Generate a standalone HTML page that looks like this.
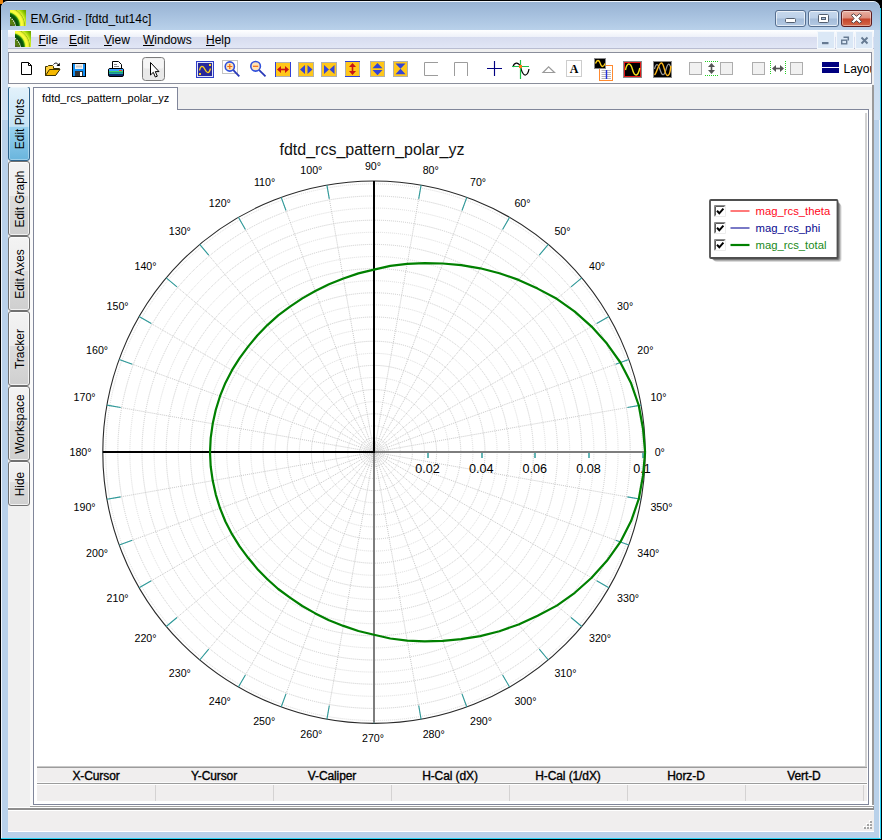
<!DOCTYPE html>
<html lang="en">
<head>
<meta charset="utf-8">
<title>EM.Grid - [fdtd_tut14c]</title>
<style>
html,body{margin:0;padding:0;}
body{width:882px;height:840px;overflow:hidden;background:#000;position:relative;font-family:"Liberation Sans",sans-serif;}
.abs{position:absolute;}
#frame{left:1px;top:1px;width:879px;height:837px;background:#b9d1ea;border-radius:7px 7px 0 0;overflow:hidden;}
#frame .hl{left:0;top:0;right:0;bottom:0;border:1px solid #eef4fb;border-radius:7px 7px 0 0;border-bottom:none;}
#cyanR{left:880px;top:8px;width:1px;height:831px;background:#27d4f5;}
#cyanB{left:1px;top:838px;width:880px;height:1px;background:#27d4f5;}
#orange{left:0;top:0;width:3px;height:4px;background:#e8820c;}
#titlebar{left:1px;top:2px;width:879px;height:28px;background:linear-gradient(#98b3d3 0,#a6c0de 45%,#b9d1ea 100%);border-radius:6px 6px 0 0;}
#sideL{left:2px;top:30px;width:6px;height:90px;background:linear-gradient(#c6d9ee,#cfe0f2);}
#sideR{left:874px;top:30px;width:6px;height:90px;background:linear-gradient(#c6d9ee,#cfe0f2);}
#title{left:30.500px;top:10.500px;font-size:12px;line-height:16px;color:#000;white-space:nowrap;}
#client{left:8px;top:30px;width:866px;height:802px;background:#f0f0f0;}
#menubar{left:8px;top:30px;width:866px;height:18px;background:linear-gradient(#ffffff 0,#eef1f9 38%,#d7dcef 39%,#e1e6f5 100%);}
#menuline{left:8px;top:48px;width:866px;height:1px;background:#b9bdd1;}
.menu{top:33px;font-size:12px;line-height:14px;color:#000;white-space:nowrap;}
.menu u{text-decoration:underline;text-underline-offset:1px;}
#toolbar{left:8px;top:52px;width:862px;height:30px;background:#fff;border:1px solid #8a8e9b;}
.capbtn{top:10px;height:15px;border:1px solid #566f90;border-radius:3px;box-shadow:inset 0 0 0 1px rgba(255,255,255,.65);background:linear-gradient(#c6d8ed 0,#bcd0e8 48%,#a4bcd9 52%,#b3c9e3 100%);}
#closebtn{border-color:#5c1b1e;background:linear-gradient(#e9b0a3 0,#dc8d7c 48%,#c5432a 52%,#d4694a 100%);box-shadow:inset 0 0 0 1px rgba(255,255,255,.4);}
.mdibtn{top:31px;width:16px;height:16px;border:1px solid #f4f8fc;background:#dbe8f6;}
.vtab{left:8px;width:20px;border:1px solid #707070;border-radius:3px;background:linear-gradient(#f3f3f3 0,#ececec 46%,#dedede 47%,#cfcfcf 100%);box-shadow:inset 0 0 0 1px rgba(255,255,255,.7);}
.vtab.sel{border-color:#2c628b;background:linear-gradient(#e3f2fb 0,#c4e3f5 54%,#98d1ef 55%,#6ab5dd 100%);box-shadow:inset 0 0 0 1px rgba(255,255,255,.35);}
.vtab span{position:absolute;left:50%;top:50%;font-size:13px;line-height:14px;white-space:nowrap;color:#000;transform:translate(-50%,-50%) translate(1.4px,0) rotate(-90deg) scale(0.915,0.97);}
#page{left:33px;top:109px;width:834px;height:694px;background:#fff;border:1px solid #80869a;}
#doctab{left:33px;top:87px;width:143px;height:22px;background:#fff;border:1px solid #80869a;border-bottom:none;}
#doctab span{position:absolute;left:8px;top:3px;font-size:11px;line-height:14px;white-space:nowrap;color:#000;}
#gap{left:30px;top:87px;width:3px;height:719px;background:#fafafa;}
.th{top:769px;height:14px;font-size:12px;font-weight:normal;-webkit-text-stroke:0.35px #000;line-height:14px;text-align:center;color:#000;width:118px;letter-spacing:-0.1px;}
#status{left:8px;top:810px;width:866px;height:22px;background:#f0eeee;border-top:1px solid #fff;border-bottom:1px solid #fff;box-sizing:border-box;}
</style>
</head>
<body>
<div class="abs" id="orange"></div>
<div class="abs" id="cyanR"></div>
<div class="abs" id="cyanB"></div>
<div class="abs" id="frame"><div class="abs hl"></div></div>
<div class="abs" id="titlebar"></div>
<div class="abs" id="sideL"></div>
<div class="abs" id="sideR"></div>
<div class="abs" id="client"></div>

<!-- title icon -->
<svg class="abs" style="left:10px;top:10px" width="16" height="16" viewBox="0 0 16 16">
<defs><radialGradient id="ig" gradientUnits="userSpaceOnUse" cx="-3.6" cy="15.6" r="24">
<stop offset="0" stop-color="#6f8f14"/><stop offset=".35" stop-color="#4f7a10"/><stop offset=".39" stop-color="#0a4a08"/><stop offset=".5" stop-color="#0b5c0c"/><stop offset=".545" stop-color="#3c9c10"/><stop offset=".58" stop-color="#d5ee30"/><stop offset=".63" stop-color="#ffff3c"/><stop offset=".7" stop-color="#f2f53a"/><stop offset=".74" stop-color="#c8e020"/><stop offset=".76" stop-color="#a2ba18"/><stop offset=".785" stop-color="#d8f030"/><stop offset=".86" stop-color="#a4d80c"/><stop offset=".95" stop-color="#7ab400"/><stop offset="1" stop-color="#6ea800"/></radialGradient>
<g id="emicon"><rect width="16" height="16" fill="url(#ig)"/><path d="M0 7.4 C2.6 9 4.6 11.8 5.6 15.6" fill="none" stroke="#fff" stroke-width="1.1" stroke-dasharray="1.3 1"/><rect x="0" y="14.6" width="2.4" height="1.4" fill="#4a4a3a" opacity=".8"/></g></defs>
<use href="#emicon"/>
</svg>
<div class="abs" id="title">EM.Grid - [fdtd_tut14c]</div>

<!-- caption buttons -->
<div class="abs capbtn" style="left:775px;width:29px"></div>
<div class="abs capbtn" style="left:808px;width:29px"></div>
<div class="abs capbtn" id="closebtn" style="left:841px;width:29px"></div>
<svg class="abs" style="left:775px;top:10px" width="98" height="17" viewBox="0 0 98 17">
<rect x="10.5" y="8.5" width="10" height="4" rx="1" fill="#fff" stroke="#535f70" stroke-width="1"/>
<rect x="43.5" y="4.5" width="10" height="8" rx="1" fill="#fff" stroke="#535f70" stroke-width="1"/>
<rect x="46.5" y="7.5" width="4" height="2" fill="#a9bfdb" stroke="#535f70" stroke-width="1"/>
<path d="M76.3 5.2 L78.6 3.8 L81.5 6.3 L84.4 3.8 L86.7 5.2 L83.9 8.5 L86.7 11.8 L84.4 13.2 L81.5 10.7 L78.6 13.2 L76.3 11.8 L79.1 8.5Z" fill="#fff" stroke="#5e4a4a" stroke-width="1" stroke-linejoin="round"/>
</svg>

<!-- menu bar -->
<div class="abs" id="menubar"></div>
<div class="abs" id="menuline"></div>
<svg class="abs" style="left:15px;top:31px" width="16" height="16" viewBox="0 0 16 16"><use href="#emicon"/></svg>
<div class="abs menu" style="left:38.5px"><u>F</u>ile</div>
<div class="abs menu" style="left:69px"><u>E</u>dit</div>
<div class="abs menu" style="left:104px"><u>V</u>iew</div>
<div class="abs menu" style="left:143px"><u>W</u>indows</div>
<div class="abs menu" style="left:206px"><u>H</u>elp</div>
<div class="abs mdibtn" style="left:817px"></div>
<div class="abs mdibtn" style="left:836px"></div>
<div class="abs mdibtn" style="left:855px"></div>
<svg class="abs" style="left:817px;top:31px" width="57" height="18" viewBox="0 0 57 18">
<rect x="5" y="11" width="6.5" height="2.2" fill="#667a92"/>
<path d="M26.5 6.3 H31.3 V9.5" fill="none" stroke="#667a92" stroke-width="1.5"/>
<rect x="24.7" y="9.2" width="5" height="3.6" fill="none" stroke="#667a92" stroke-width="1.4"/>
<path d="M44.5 6.5 L50.5 12.5 M50.5 6.5 L44.5 12.5" stroke="#667a92" stroke-width="1.9"/>
</svg>

<!-- toolbar -->
<div class="abs" id="toolbar"></div>
<div class="abs" style="left:872px;top:85px;width:2px;height:725px;background:#9a9a9a"></div>
<svg class="abs" style="left:9px;top:53px" width="862" height="30" viewBox="9 53 862 30" font-family="Liberation Sans, sans-serif">
<!-- new -->
<path d="M21.500 62.500 H28.500 L31.500 65.500 V74.500 H21.500Z" fill="#fff" stroke="#000" stroke-width="1"/>
<path d="M28.500 62.500 V65.500 H31.500" fill="none" stroke="#000" stroke-width="1"/>
<!-- open -->
<path d="M45.500 75.500 V66.500 H47.500 L48.500 65.500 H52.500 L53.500 66.500 V68.500 H59.500 L55.500 75.500Z" fill="#ffcf3a" stroke="#3a3000" stroke-width="1" stroke-linejoin="round"/>
<path d="M45.500 75.500 L49.500 69.500 H60 L55.500 75.500Z" fill="#f5b800" stroke="#3a3000" stroke-width="1" stroke-linejoin="round"/>
<path d="M53.500 64.500 C55 62.500 57.500 62.500 58.500 65.500" fill="none" stroke="#000" stroke-width="1"/>
<path d="M56.500 66 H59.800 V62.800Z" fill="#000"/>
<!-- save -->
<rect x="72.500" y="63.500" width="13" height="13" fill="#1390f5" stroke="#000" stroke-width="1"/>
<rect x="75" y="64" width="8" height="5" fill="#f2f2f2"/>
<rect x="76" y="65.500" width="6" height="2" fill="#c8c8c8"/>
<rect x="75" y="71" width="8" height="5" fill="#333"/>
<rect x="80" y="72" width="2" height="4" fill="#fff"/>
<!-- print -->
<path d="M112.500 69 V61.500 H118.500 L121.500 64.500 V69Z" fill="#fff" stroke="#000" stroke-width="1"/>
<path d="M114 64.500 H117 M114 66.500 H119" stroke="#888" stroke-width="1"/>
<rect x="108.500" y="68.500" width="15" height="8" rx="1.500" fill="#0b2a6e" stroke="#000" stroke-width="1"/>
<rect x="109" y="69" width="14" height="2" fill="#3aa0ff"/>
<rect x="109" y="71" width="14" height="1.500" fill="#3bd06a"/>
<rect x="109" y="72.500" width="14" height="1.500" fill="#1aa6a6"/>
<rect x="119" y="70" width="3" height="1" fill="#f04030"/>
<!-- pointer button -->
<rect x="142.500" y="57.500" width="22" height="23" rx="3" fill="#e9e9e9" stroke="#7c7c7c" stroke-width="1"/>
<rect x="143.500" y="58.500" width="20" height="10" rx="2" fill="#f5f5f5"/>
<path d="M150.500 62.500 V75 L153.300 72.300 L155.300 77 L157.300 76.200 L155.300 71.600 H159Z" fill="#fff" stroke="#000" stroke-width="1" stroke-linejoin="round"/>
<!-- graph icon -->
<rect x="196.500" y="61.500" width="17" height="16" fill="#dfe5fa" stroke="#3040c8" stroke-width="1"/>
<rect x="198" y="63" width="14" height="13" fill="#28289c"/>
<path d="M199.5 70.5 C200.5 65.3 203 65.3 205 69.5 S209 74.2 210.5 68.5" fill="none" stroke="#ffd21a" stroke-width="1.3"/>
<rect x="209" y="64" width="2" height="2" fill="#ffd21a"/><rect x="199" y="73" width="2" height="2" fill="#ffd21a"/>
<!-- zoom in -->
<rect x="222.500" y="60.500" width="15" height="13" fill="#fff" stroke="#c4c4c4" stroke-width="1"/>
<circle cx="229.800" cy="66.500" r="4.600" fill="#ffe3b5" stroke="#3050dc" stroke-width="1.600"/>
<path d="M227.300 66.500 H232.300 M229.800 64 V69" stroke="#f06a10" stroke-width="1.200"/>
<path d="M233.300 70.200 L239.300 76.300" stroke="#2838b8" stroke-width="1.800"/>
<!-- zoom out -->
<circle cx="255.600" cy="66.300" r="4.800" fill="#ffe3b5" stroke="#3050dc" stroke-width="1.600"/>
<path d="M253 66.300 H258.200" stroke="#f06a10" stroke-width="1.200"/>
<path d="M259.200 70.200 L265.500 76.300" stroke="#2838b8" stroke-width="1.800"/>
<!-- h expand -->
<rect x="275" y="62" width="16" height="15" fill="#ffc71a"/>
<path d="M275 62.500 H291 M275 76.500 H291" stroke="#b0b0b0" stroke-width="1"/>
<path d="M275.500 62 V77 M290.500 62 V77" stroke="#3040d8" stroke-width="1"/>
<path d="M277 69.500 L281 66 V73Z M289 69.500 L285 66 V73Z" fill="#c81414"/>
<path d="M280 69.500 H286" stroke="#c81414" stroke-width="1.600"/>
<!-- <> -->
<rect x="298.500" y="62.500" width="15" height="14" fill="#ffc71a" stroke="#b0b0b0" stroke-width="1"/>
<path d="M300 69.500 L305 65 V74Z M312.500 69.500 L307.500 65 V74Z" fill="#3344d8"/>
<!-- >< -->
<rect x="321.500" y="62.500" width="15" height="14" fill="#ffc71a" stroke="#b0b0b0" stroke-width="1"/>
<path d="M324 65 L329 69.500 L324 74Z M334.500 65 L329.500 69.500 L334.500 74Z" fill="#3344d8"/>
<!-- v expand -->
<rect x="345" y="61" width="15" height="16" fill="#ffc71a"/>
<path d="M345.500 61 V77 M359.500 61 V77" stroke="#b0b0b0" stroke-width="1"/>
<path d="M345 61.500 H360 M345 76.500 H360" stroke="#3040d8" stroke-width="1"/>
<path d="M352.500 63 L349 67 H356Z M352.500 75 L349 71 H356Z" fill="#c81414"/>
<path d="M352.500 66 V72" stroke="#c81414" stroke-width="1.600"/>
<!-- up/down -->
<rect x="370.500" y="61.500" width="14" height="15" fill="#ffc71a" stroke="#b0b0b0" stroke-width="1"/>
<path d="M377.500 63 L372.500 68.300 H382.500Z M377.500 75.300 L372.500 70 H382.500Z" fill="#3344d8"/>
<!-- hourglass -->
<rect x="393.500" y="61.500" width="14" height="15" fill="#ffc71a" stroke="#b0b0b0" stroke-width="1"/>
<path d="M395.500 63.500 H405.500 L400.500 68.800Z M395.500 74.200 H405.500 L400.500 68.800Z" fill="#3344d8"/>
<!-- brackets -->
<path d="M438 62.500 H424.500 V75.500 H438" fill="none" stroke="#9c9c9c" stroke-width="1"/>
<path d="M454.500 76 V62.500 H467.500 V76" fill="none" stroke="#9c9c9c" stroke-width="1"/>
<!-- plus -->
<path d="M487 68.5 H502 M494.5 61 V76" stroke="#000080" stroke-width="1.15"/>
<!-- cursor on sine -->
<path d="M513 67 C514 62.500 518 61.500 520.500 66.600 C521.500 71 523 75.500 525.500 75 C527.500 74.500 528.500 72 529 69" fill="none" stroke="#000" stroke-width="1.200"/>
<path d="M512 66.500 H529 M520.500 60 V79" stroke="#1fc04a" stroke-width="1.200"/>
<rect x="519" y="65" width="3" height="3" fill="#ff7a14"/>
<!-- triangle -->
<path d="M543 72.500 L548.600 66.800 L554.500 72.500Z" fill="none" stroke="#9a9a9a" stroke-width="1.200"/>
<!-- A -->
<rect x="566.500" y="60.500" width="15" height="16" fill="#fff" stroke="#9a9a9a" stroke-width="1" stroke-dasharray="1 1"/>
<text x="574" y="72.8" font-family="Liberation Serif, serif" font-weight="bold" font-size="12" text-anchor="middle" fill="#000">A</text>
<!-- sine + doc -->
<rect x="599.500" y="65.500" width="13" height="15" fill="#fff" stroke="#ff8a30" stroke-width="1"/>
<path d="M601.500 70.500 H611 M601.500 72.500 H611 M601.500 74.500 H611 M601.500 76.500 H611 M601.500 78.500 H611" stroke="#b8b8b8" stroke-width="1"/>
<path d="M606.500 70 V79" stroke="#2030e0" stroke-width="1.400"/>
<rect x="594.500" y="58.500" width="11" height="10" fill="#000" stroke="#8a8a8a" stroke-width="1"/>
<path d="M595.500 63.500 C597 59.500 599 59.500 600.300 63.500 S603.500 67.500 605 63.500" fill="none" stroke="#ffd21a" stroke-width="1.300"/>
<!-- red sine -->
<rect x="623.500" y="61.500" width="18" height="16" fill="#000" stroke="#8a8a8a" stroke-width="1"/>
<rect x="624.500" y="62.500" width="16" height="14" fill="#000" stroke="#e01818" stroke-width="1"/>
<path d="M625.500 70 C627 62 630.500 62 632.500 69.500 S638 77 639.800 68" fill="none" stroke="#f5e21a" stroke-width="1.400"/>
<!-- two sines -->
<rect x="653.500" y="61.500" width="18" height="16" fill="#000" stroke="#8a8a8a" stroke-width="1"/>
<path d="M654.500 69 C656 63 658 63 660 69.500 S664 77 666 69.500 S669.500 63 671 68" fill="none" stroke="#9a9a9a" stroke-width="1.200"/>
<path d="M654.500 75 C657 73 658.500 62.500 661.500 63 S664.500 76 667.500 75.500 S670 70 671 66" fill="none" stroke="#ffb81a" stroke-width="1.400"/>
<!-- box ↕ box -->
<rect x="689.500" y="62.500" width="12" height="12" fill="#f1f1f1" stroke="#adadad" stroke-width="1"/>
<rect x="720.500" y="62.500" width="12" height="12" fill="#f1f1f1" stroke="#adadad" stroke-width="1"/>
<path d="M705 61.500 H718 M705 75.500 H718" stroke="#22d022" stroke-width="1" stroke-dasharray="1 1"/>
<path d="M711.500 63 L708 67 H715Z M711.500 74 L708 70 H715Z" fill="#555"/>
<path d="M711.500 66 V71" stroke="#555" stroke-width="1.600"/>
<!-- box ↔ box -->
<rect x="752.500" y="62.500" width="12" height="12" fill="#f1f1f1" stroke="#adadad" stroke-width="1"/>
<rect x="790.500" y="62.500" width="12" height="12" fill="#f1f1f1" stroke="#adadad" stroke-width="1"/>
<path d="M770.500 61 V74 M785.500 61 V74" stroke="#22d022" stroke-width="1" stroke-dasharray="1 1"/>
<path d="M772 68.500 L776 65 V72Z M784 68.500 L780 65 V72Z" fill="#555"/>
<path d="M775 68.500 H781" stroke="#555" stroke-width="1.600"/>
<!-- layout -->
<rect x="822" y="62" width="17" height="5" fill="#000080"/>
<rect x="822" y="68" width="17" height="5" fill="#000080"/>
<text x="843.500" y="72.500" font-size="12" fill="#000">Layout</text>
</svg>
<!-- left vertical tabs -->
<div class="abs vtab sel" style="top:86px;height:73px"><span>Edit Plots</span></div>
<div class="abs vtab" style="top:161px;height:73px"><span>Edit Graph</span></div>
<div class="abs vtab" style="top:236px;height:73px"><span>Edit Axes</span></div>
<div class="abs vtab" style="top:311px;height:73px"><span>Tracker</span></div>
<div class="abs vtab" style="top:386px;height:73px"><span>Workspace</span></div>
<div class="abs vtab" style="top:461px;height:43px"><span>Hide</span></div>
<div class="abs" id="gap"></div>

<!-- document page -->
<div class="abs" id="page"></div>
<div class="abs" id="doctab"><span>fdtd_rcs_pattern_polar_yz</span></div>
<div class="abs" style="left:869px;top:110px;width:3px;height:696px;background:#fff"></div>
<div class="abs" style="left:8px;top:84px;width:864px;height:3px;background:#fcfcfc"></div>
<div class="abs" style="left:865px;top:113px;width:2px;height:653px;background:#d2d2d2"></div>

<!-- splitter / status -->
<div class="abs" style="left:30px;top:805px;width:844px;height:1px;background:#fff"></div>
<div class="abs" style="left:30px;top:806px;width:844px;height:1px;background:#a0a0a0"></div>
<div class="abs" style="left:8px;top:807px;width:865px;height:1px;background:#fff"></div>
<div class="abs" style="left:8px;top:808px;width:866px;height:2px;background:#8e8e8e"></div>
<div class="abs" id="status"></div>
<svg class="abs" style="left:861px;top:819px" width="12" height="12" viewBox="0 0 12 12">
<g fill="#fff"><rect x="8" y="1" width="2" height="2"/><rect x="5" y="4" width="2" height="2"/><rect x="8" y="4" width="2" height="2"/><rect x="2" y="7" width="2" height="2"/><rect x="5" y="7" width="2" height="2"/><rect x="8" y="7" width="2" height="2"/></g>
<g fill="#a5a5a5"><rect x="9" y="2" width="2" height="2"/><rect x="6" y="5" width="2" height="2"/><rect x="9" y="5" width="2" height="2"/><rect x="3" y="8" width="2" height="2"/><rect x="6" y="8" width="2" height="2"/><rect x="9" y="8" width="2" height="2"/></g>
</svg>

<!-- cursor table -->
<div class="abs" style="left:37px;top:766px;width:830px;height:1px;background:#c9c9c9"></div>
<div class="abs" style="left:37px;top:767px;width:830px;height:1px;background:#9c9c9c"></div>
<div class="abs" style="left:37px;top:768px;width:830px;height:14px;background:#f0eeee"></div>
<div class="abs" style="left:37px;top:782px;width:830px;height:1px;background:#fbfbfb"></div>
<div class="abs" style="left:37px;top:783px;width:830px;height:1px;background:#9c9c9c"></div>
<div class="abs" style="left:37px;top:784px;width:830px;height:1px;background:#fff"></div>
<div class="abs" style="left:37px;top:785px;width:830px;height:16px;background:#f0eeee"></div>
<div class="abs" style="left:155px;top:785px;width:1px;height:16px;background:#d4d2d2"></div>
<div class="abs" style="left:273px;top:785px;width:1px;height:16px;background:#d4d2d2"></div>
<div class="abs" style="left:391px;top:785px;width:1px;height:16px;background:#d4d2d2"></div>
<div class="abs" style="left:509px;top:785px;width:1px;height:16px;background:#d4d2d2"></div>
<div class="abs" style="left:627px;top:785px;width:1px;height:16px;background:#d4d2d2"></div>
<div class="abs" style="left:745px;top:785px;width:1px;height:16px;background:#d4d2d2"></div>
<div class="abs" style="left:863px;top:785px;width:1px;height:16px;background:#d4d2d2"></div>
<div class="abs th" style="left:37px">X-Cursor</div>
<div class="abs th" style="left:155px">Y-Cursor</div>
<div class="abs th" style="left:273px">V-Caliper</div>
<div class="abs th" style="left:391px">H-Cal (dX)</div>
<div class="abs th" style="left:509px">H-Cal (1/dX)</div>
<div class="abs th" style="left:627px">Horz-D</div>
<div class="abs th" style="left:745px">Vert-D</div>
<svg class="abs" style="left:34px;top:110px" width="834" height="656" viewBox="34 110 834 656" font-family="Liberation Sans, sans-serif">
<g fill="none" stroke="#c9c9c9" stroke-width="1" stroke-dasharray="1 1">
<circle cx="374.0" cy="452.2" r="268.3" stroke="#dcdcdc"/>
<circle cx="374.0" cy="452.2" r="256.2" stroke="#cbcbcb"/>
<circle cx="374.0" cy="452.2" r="244.1" stroke="#dcdcdc"/>
<circle cx="374.0" cy="452.2" r="232.0" stroke="#cbcbcb"/>
<circle cx="374.0" cy="452.2" r="219.9" stroke="#dcdcdc"/>
<circle cx="374.0" cy="452.2" r="207.8" stroke="#cbcbcb"/>
<circle cx="374.0" cy="452.2" r="195.7" stroke="#dcdcdc"/>
<circle cx="374.0" cy="452.2" r="183.6" stroke="#cbcbcb"/>
<circle cx="374.0" cy="452.2" r="171.5" stroke="#dcdcdc"/>
<circle cx="374.0" cy="452.2" r="159.4" stroke="#cbcbcb"/>
<circle cx="374.0" cy="452.2" r="147.3" stroke="#dcdcdc"/>
<circle cx="374.0" cy="452.2" r="135.2" stroke="#cbcbcb"/>
<circle cx="374.0" cy="452.2" r="123.1" stroke="#dcdcdc"/>
<circle cx="374.0" cy="452.2" r="111.0" stroke="#cbcbcb"/>
<circle cx="374.0" cy="452.2" r="98.9" stroke="#dcdcdc"/>
<circle cx="374.0" cy="452.2" r="86.8" stroke="#cbcbcb"/>
<circle cx="374.0" cy="452.2" r="74.7" stroke="#dcdcdc"/>
<circle cx="374.0" cy="452.2" r="62.6" stroke="#cbcbcb"/>
<circle cx="374.0" cy="452.2" r="50.5" stroke="#dcdcdc"/>
<circle cx="374.0" cy="452.2" r="38.4" stroke="#cbcbcb"/>
<circle cx="374.0" cy="452.2" r="26.3" stroke="#dcdcdc"/>
<circle cx="374.0" cy="452.2" r="14.2" stroke="#cbcbcb"/>
<circle cx="374.0" cy="452.2" r="2.5" stroke="#dcdcdc"/>
<circle cx="374.0" cy="452.2" r="5.0" stroke="#dcdcdc"/>
<circle cx="374.0" cy="452.2" r="7.5" stroke="#dcdcdc"/>
<circle cx="374.0" cy="452.2" r="10.0" stroke="#dcdcdc"/>
<path d="M374.0 452.2L641.1 405.1M374.0 452.2L628.8 359.4M374.0 452.2L608.9 316.6M374.0 452.2L581.8 277.9M374.0 452.2L548.3 244.4M374.0 452.2L509.6 217.3M374.0 452.2L466.8 197.4M374.0 452.2L421.1 185.1M374.0 452.2L326.9 185.1M374.0 452.2L281.2 197.4M374.0 452.2L238.4 217.3M374.0 452.2L199.7 244.4M374.0 452.2L166.2 277.9M374.0 452.2L139.1 316.6M374.0 452.2L119.2 359.4M374.0 452.2L106.9 405.1M374.0 452.2L106.9 499.3M374.0 452.2L119.2 545.0M374.0 452.2L139.1 587.8M374.0 452.2L166.2 626.5M374.0 452.2L199.7 660.0M374.0 452.2L238.4 687.1M374.0 452.2L281.2 707.0M374.0 452.2L326.9 719.3M374.0 452.2L421.1 719.3M374.0 452.2L466.8 707.0M374.0 452.2L509.6 687.1M374.0 452.2L548.3 660.0M374.0 452.2L581.8 626.5M374.0 452.2L608.9 587.8M374.0 452.2L628.8 545.0M374.0 452.2L641.1 499.3" stroke="#c9c9c9"/>
</g>
<circle cx="374.0" cy="452.2" r="271.2" fill="none" stroke="#2a2a2a" stroke-width="1.100"/>
<path d="M645.2 452.2L631.2 452.2M641.1 405.1L627.3 407.5M628.8 359.4L615.7 364.2M608.9 316.6L596.7 323.6M581.8 277.9L571.0 286.9M548.3 244.4L539.3 255.2M509.6 217.3L502.6 229.5M466.8 197.4L462.0 210.5M421.1 185.1L418.7 198.9M374.0 181.0L374.0 195.0M326.9 185.1L329.3 198.9M281.2 197.4L286.0 210.5M238.4 217.3L245.4 229.5M199.7 244.4L208.7 255.2M166.2 277.9L177.0 286.9M139.1 316.6L151.3 323.6M119.2 359.4L132.3 364.2M106.9 405.1L120.7 407.5M102.8 452.2L116.8 452.2M106.9 499.3L120.7 496.9M119.2 545.0L132.3 540.2M139.1 587.8L151.3 580.8M166.2 626.5L177.0 617.5M199.7 660.0L208.7 649.2M238.4 687.1L245.4 674.9M281.2 707.0L286.0 693.9M326.9 719.3L329.3 705.5M374.0 723.4L374.0 709.4M421.1 719.3L418.7 705.5M466.8 707.0L462.0 693.9M509.6 687.1L502.6 674.9M548.3 660.0L539.3 649.2M581.8 626.5L571.0 617.5M608.9 587.8L596.7 580.8M628.8 545.0L615.7 540.2M641.1 499.3L627.3 496.9" stroke="#2e9a9a" stroke-width="1.100" fill="none"/>
<rect x="374" y="451" width="271.2" height="2" fill="#7d7d7d"/>
<rect x="373" y="452" width="2" height="270.7" fill="#7d7d7d"/>
<rect x="102.8" y="451" width="272.2" height="2" fill="#000"/>
<rect x="373" y="181.0" width="2" height="271.2" fill="#000"/>
<rect x="427" y="453" width="2" height="5" fill="#62b4b4"/>
<text x="427.6" y="472.700" font-size="12.600" text-anchor="middle" fill="#000">0.02</text>
<rect x="481" y="453" width="2" height="5" fill="#62b4b4"/>
<text x="481.2" y="472.700" font-size="12.600" text-anchor="middle" fill="#000">0.04</text>
<rect x="534" y="453" width="2" height="5" fill="#62b4b4"/>
<text x="534.8" y="472.700" font-size="12.600" text-anchor="middle" fill="#000">0.06</text>
<rect x="588" y="453" width="2" height="5" fill="#62b4b4"/>
<text x="588.4" y="472.700" font-size="12.600" text-anchor="middle" fill="#000">0.08</text>
<rect x="642" y="453" width="2" height="5" fill="#62b4b4"/>
<text x="642.0" y="472.700" font-size="12.600" text-anchor="middle" fill="#000">0.1</text>
<polyline points="645.1,452.2 643.0,428.7 638.8,405.5 631.1,383.3 620.4,362.5 606.9,343.6 591.6,326.6 574.8,311.6 556.8,298.8 537.6,288.6 518.6,279.9 499.4,273.2 480.2,268.3 461.2,265.2 442.7,263.5 424.7,263.1 407.2,263.8 390.3,265.9 374.0,269.6 358.4,273.4 343.4,278.5 329.0,284.2 315.3,291.0 302.3,298.4 290.0,306.7 278.2,315.4 267.4,325.1 257.3,335.5 248.1,346.6 239.6,358.1 232.0,370.2 225.4,382.9 220.0,396.2 215.8,409.8 212.7,423.8 210.7,437.9 210.0,452.2 210.7,466.5 212.7,480.6 215.8,494.6 220.0,508.2 225.4,521.5 232.0,534.2 239.6,546.3 248.1,557.8 257.3,568.9 267.4,579.3 278.2,589.0 290.0,597.7 302.3,606.0 315.3,613.4 329.0,620.2 343.4,625.9 358.4,631.0 374.0,634.8 390.3,638.5 407.2,640.6 424.7,641.3 442.7,640.9 461.2,639.2 480.2,636.1 499.4,631.2 518.6,624.5 537.6,615.8 556.8,605.6 574.8,592.8 591.6,577.8 606.9,560.8 620.4,541.9 631.1,521.1 638.8,498.9 643.0,475.7 645.1,452.2" fill="none" stroke="#008000" stroke-width="2.200" stroke-linejoin="round"/>
<text x="654.7" y="455.6" font-size="10.670" text-anchor="start" fill="#000">0°</text>
<text x="650.4" y="400.7" font-size="10.670" text-anchor="start" fill="#000">10°</text>
<text x="637.3" y="354.2" font-size="10.670" text-anchor="start" fill="#000">20°</text>
<text x="617.1" y="309.9" font-size="10.670" text-anchor="start" fill="#000">30°</text>
<text x="589.0" y="269.8" font-size="10.670" text-anchor="start" fill="#000">40°</text>
<text x="554.4" y="235.2" font-size="10.670" text-anchor="start" fill="#000">50°</text>
<text x="514.4" y="207.1" font-size="10.670" text-anchor="start" fill="#000">60°</text>
<text x="470.0" y="186.4" font-size="10.670" text-anchor="start" fill="#000">70°</text>
<text x="422.7" y="173.8" font-size="10.670" text-anchor="start" fill="#000">80°</text>
<text x="373.0" y="169.5" font-size="10.670" text-anchor="middle" fill="#000">90°</text>
<text x="322.4" y="173.8" font-size="10.670" text-anchor="end" fill="#000">100°</text>
<text x="275.2" y="186.4" font-size="10.670" text-anchor="end" fill="#000">110°</text>
<text x="230.9" y="207.1" font-size="10.670" text-anchor="end" fill="#000">120°</text>
<text x="190.9" y="235.2" font-size="10.670" text-anchor="end" fill="#000">130°</text>
<text x="156.5" y="269.8" font-size="10.670" text-anchor="end" fill="#000">140°</text>
<text x="128.6" y="309.9" font-size="10.670" text-anchor="end" fill="#000">150°</text>
<text x="108.1" y="354.2" font-size="10.670" text-anchor="end" fill="#000">160°</text>
<text x="95.6" y="400.7" font-size="10.670" text-anchor="end" fill="#000">170°</text>
<text x="91.5" y="455.6" font-size="10.670" text-anchor="end" fill="#000">180°</text>
<text x="95.6" y="510.6" font-size="10.670" text-anchor="end" fill="#000">190°</text>
<text x="108.1" y="557.4" font-size="10.670" text-anchor="end" fill="#000">200°</text>
<text x="128.6" y="601.8" font-size="10.670" text-anchor="end" fill="#000">210°</text>
<text x="156.5" y="641.9" font-size="10.670" text-anchor="end" fill="#000">220°</text>
<text x="190.9" y="676.6" font-size="10.670" text-anchor="end" fill="#000">230°</text>
<text x="230.9" y="704.7" font-size="10.670" text-anchor="end" fill="#000">240°</text>
<text x="275.2" y="725.4" font-size="10.670" text-anchor="end" fill="#000">250°</text>
<text x="322.4" y="738.0" font-size="10.670" text-anchor="end" fill="#000">260°</text>
<text x="373.0" y="741.8" font-size="10.670" text-anchor="middle" fill="#000">270°</text>
<text x="422.7" y="738.0" font-size="10.670" text-anchor="start" fill="#000">280°</text>
<text x="470.0" y="725.4" font-size="10.670" text-anchor="start" fill="#000">290°</text>
<text x="514.4" y="704.7" font-size="10.670" text-anchor="start" fill="#000">300°</text>
<text x="554.4" y="676.6" font-size="10.670" text-anchor="start" fill="#000">310°</text>
<text x="589.0" y="641.9" font-size="10.670" text-anchor="start" fill="#000">320°</text>
<text x="617.1" y="601.8" font-size="10.670" text-anchor="start" fill="#000">330°</text>
<text x="637.3" y="557.4" font-size="10.670" text-anchor="start" fill="#000">340°</text>
<text x="650.4" y="510.6" font-size="10.670" text-anchor="start" fill="#000">350°</text>
<text x="372" y="155" font-size="16" text-anchor="middle" fill="#111">fdtd_rcs_pattern_polar_yz</text>
<rect x="714" y="204" width="127.5" height="58" rx="3" fill="#555" opacity=".22"/>
<rect x="713" y="203" width="127.5" height="58" rx="2" fill="#555" opacity=".32"/>
<rect x="712" y="202" width="127.5" height="58" rx="2" fill="#444" opacity=".5"/>
<rect x="710" y="200" width="127.5" height="58" rx="1" fill="#fff" stroke="#4f4f4f" stroke-width="1.800"/>
<rect x="714" y="205" width="12" height="12" fill="#fff"/>
<path d="M725.500 205.5 H714.500 V216.5" fill="none" stroke="#8a8a8a" stroke-width="1"/>
<path d="M724.500 206.5 H715.500 V215.5" fill="none" stroke="#5a5a5a" stroke-width="1"/>
<path d="M725.500 205.5 V216.5 H714.500" fill="none" stroke="#ececec" stroke-width="1"/>
<path d="M717 210.8 L719.300 213.3 L723.400 208.6" fill="none" stroke="#000" stroke-width="2"/>
<path d="M730.500 211.0 H749.500" stroke="#ff6a6a" stroke-width="1.8"/>
<text x="755.500" y="214.6" font-size="11.3" fill="#ff0820">mag_rcs_theta</text>
<rect x="714" y="222" width="12" height="12" fill="#fff"/>
<path d="M725.500 222.5 H714.500 V233.5" fill="none" stroke="#8a8a8a" stroke-width="1"/>
<path d="M724.500 223.5 H715.500 V232.5" fill="none" stroke="#5a5a5a" stroke-width="1"/>
<path d="M725.500 222.5 V233.5 H714.500" fill="none" stroke="#ececec" stroke-width="1"/>
<path d="M717 227.8 L719.300 230.3 L723.400 225.6" fill="none" stroke="#000" stroke-width="2"/>
<path d="M730.500 228.0 H749.500" stroke="#6a6ac0" stroke-width="1.8"/>
<text x="755.500" y="231.6" font-size="11.3" fill="#0a0a90">mag_rcs_phi</text>
<rect x="714" y="239" width="12" height="12" fill="#fff"/>
<path d="M725.500 239.5 H714.500 V250.5" fill="none" stroke="#8a8a8a" stroke-width="1"/>
<path d="M724.500 240.5 H715.500 V249.5" fill="none" stroke="#5a5a5a" stroke-width="1"/>
<path d="M725.500 239.5 V250.5 H714.500" fill="none" stroke="#ececec" stroke-width="1"/>
<path d="M717 244.8 L719.300 247.3 L723.400 242.6" fill="none" stroke="#000" stroke-width="2"/>
<path d="M730.500 245.0 H749.500" stroke="#008000" stroke-width="2.2"/>
<text x="755.500" y="248.6" font-size="11.3" fill="#208a20">mag_rcs_total</text>
</svg>
</body>
</html>
